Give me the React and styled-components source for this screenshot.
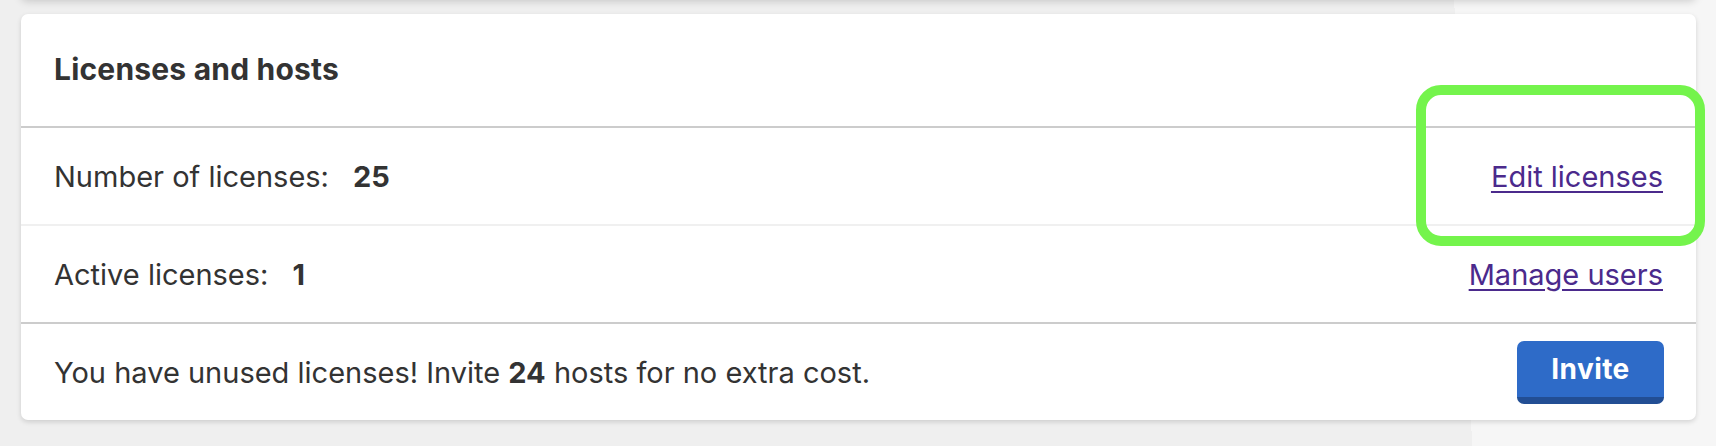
import React from 'react';
import styled, { createGlobalStyle } from 'styled-components';

const GlobalStyle = createGlobalStyle`
  * { box-sizing: border-box; }
  body {
    margin: 0;
    font-family: Inter, "Open Sans", sans-serif;
    color: #333333;
    background: #f0f0f0;
    overflow: hidden;
  }
`;

const Page = styled.div`
  position: relative;
  display: flex;
  flex-direction: column;
  width: 1716px;
  height: 446px;
  padding: 0 20px 0 21px;
  background: linear-gradient(87.7deg, #efefef 84.9%, #f6f6f6 84.9%);
  overflow: hidden;
`;

const PrevCard = styled.div`
  flex: none;
  width: 1675px;
  height: 40px;
  margin-top: -41px;
  margin-bottom: 15px;
  background: #fff;
  border-radius: 6px;
  box-shadow: 0 2px 8px rgba(0, 0, 0, 0.18);
`;

const Card = styled.section`
  flex: none;
  width: 1675px;
  background: #fff;
  border-radius: 7px;
  box-shadow: 0 2px 5px rgba(0, 0, 0, 0.14);
  overflow: hidden;
`;

const Header = styled.div`
  height: 114px;
  display: flex;
  align-items: center;
  padding: 0 33px 2px;
  border-bottom: 2px solid #cccccc;
`;

const Title = styled.h2`
  margin: 0;
  font-size: 30px;
  font-weight: 700;
  letter-spacing: 0.2px;
`;

const Row = styled.div`
  height: ${(p) => (p.last ? '96px' : '98px')};
  display: flex;
  align-items: center;
  justify-content: space-between;
  padding: 0 33px;
  border-bottom: ${(p) => (p.last ? 'none' : `2px solid ${p.strong ? '#cccccc' : '#f0f0f0'}`)};
`;

const Stat = styled.div`
  display: flex;
  align-items: baseline;
  gap: 24px;
  font-size: 29px;
`;

const Value = styled.b`
  font-weight: 700;
`;

const Link = styled.a`
  font-size: 29px;
  color: #4b2a8c;
  text-decoration: underline;
  text-decoration-thickness: 2px;
  text-underline-offset: 4px;
  cursor: pointer;
`;

const Notice = styled.p`
  margin: 0;
  font-size: 29px;

  b {
    font-weight: 700;
  }
`;

const Button = styled.button`
  width: 147px;
  height: 63px;
  margin-right: -1px;
  border: none;
  border-bottom: 7px solid #224e94;
  border-radius: 7px;
  background: #2e6bc8;
  color: #fff;
  font-family: inherit;
  font-size: 28px;
  font-weight: 700;
  letter-spacing: 0.4px;
  cursor: pointer;
`;

const Highlight = styled.div`
  position: absolute;
  left: 1416px;
  top: 85px;
  width: 289px;
  height: 161px;
  border: 10px solid #74f44c;
  border-radius: 25px;
  pointer-events: none;
`;

export default function App() {
  return (
    <>
      <GlobalStyle />
      <Page>
        <PrevCard />
        <Card>
          <Header>
            <Title>Licenses and hosts</Title>
          </Header>
          <Row>
            <Stat>
              <span>Number of licenses:</span>
              <Value>25</Value>
            </Stat>
            <Link>Edit licenses</Link>
          </Row>
          <Row strong>
            <Stat>
              <span>Active licenses:</span>
              <Value>1</Value>
            </Stat>
            <Link>Manage users</Link>
          </Row>
          <Row last>
            <Notice>
              You have unused licenses! Invite <b>24</b> hosts for no extra cost.
            </Notice>
            <Button>Invite</Button>
          </Row>
        </Card>
        <Highlight />
      </Page>
    </>
  );
}
